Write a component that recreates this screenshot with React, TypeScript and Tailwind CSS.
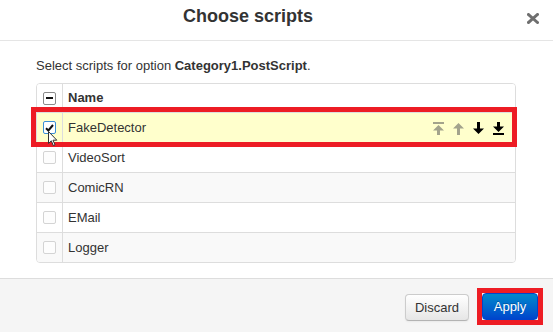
import React from "react";

type Script = { name: string; checked: boolean };

const scripts: Script[] = [
  { name: "FakeDetector", checked: true },
  { name: "VideoSort", checked: false },
  { name: "ComicRN", checked: false },
  { name: "EMail", checked: false },
  { name: "Logger", checked: false },
];

function rowBg(i: number) {
  if (i === 0) return "bg-[#ffffcc]";
  if (i % 2 === 0) return "bg-[#f9f9f9]";
  return "bg-white";
}

// glyph-style move arrows, 11x13
function MoveIcon({ kind, color }: { kind: "top" | "up" | "down" | "bottom"; color: string }) {
  const shapes: Record<string, React.ReactNode> = {
    top: (
      <>
        <rect x="0" y="0" width="11" height="2" />
        <polygon points="5.5,3 11,8.5 7,8.5 7,13 4,13 4,8.5 0,8.5" />
      </>
    ),
    up: <polygon points="5.5,1 11,6.5 7,6.5 7,13 4,13 4,6.5 0,6.5" />,
    down: <polygon points="4,0 7,0 7,6.5 11,6.5 5.5,12 0,6.5 4,6.5" />,
    bottom: (
      <>
        <polygon points="4,0 7,0 7,4.5 11,4.5 5.5,10 0,4.5 4,4.5" />
        <rect x="0" y="11" width="11" height="2" />
      </>
    ),
  };
  return (
    <svg width="11" height="13" viewBox="0 0 11 13" fill={color} className="shrink-0">
      {shapes[kind]}
    </svg>
  );
}

function Checkbox({ checked, focused }: { checked: boolean; focused?: boolean }) {
  return (
    <div
      className={[
        "w-[13px] h-[13px] rounded-[2px] border flex items-center justify-center",
        focused ? "border-[#3b8fd6] bg-white" : "border-[#d4d4d4] bg-[#fdfdfd]",
      ].join(" ")}
    >
      {checked ? (
        <svg width="9" height="8" viewBox="0 0 9 8">
          <path d="M1 4.2 L3.4 6.5 L8 1" fill="none" stroke="#111" strokeWidth="2" />
        </svg>
      ) : null}
    </div>
  );
}

export default function App() {
  return (
    <div className="w-[553px] h-[332px] bg-white overflow-hidden flex flex-col font-['Liberation_Sans',Arial,sans-serif] text-[#333]">
      {/* header */}
      <div className="h-[41px] shrink-0 border-b border-[#e5e5e5] flex items-start">
        <h3 className="w-[496px] pt-[5px] text-center text-[18px] leading-[23px] font-bold text-[#333]">
          Choose scripts
        </h3>
        <svg width="12" height="11" viewBox="0 0 12 11" className="ml-[31px] mt-[13px]">
          <path d="M1.5 1.5 L10.5 9.5 M10.5 1.5 L1.5 9.5" stroke="#6f6f6f" strokeWidth="3" strokeLinecap="square" />
        </svg>
      </div>

      {/* body */}
      <div className="flex-1 pt-[16px] pl-[36px]">
        <p className="text-[13px] leading-[18px] mb-[8px]">
          Select scripts for option <b>Category1.PostScript</b>.
        </p>

        <div className="relative w-[480px]">
          <div className="border border-[#ddd] rounded-[4px] overflow-hidden text-[13px]">
            <div className="h-[28px] flex bg-white">
              <div className="w-[26px] border-r border-[#ddd] flex items-center justify-center">
                <div className="w-[13px] h-[13px] rounded-[2px] border border-[#8a8a8a] bg-white flex items-center justify-center">
                  <div className="w-[7px] h-[2px] bg-[#111]" />
                </div>
              </div>
              <div className="pl-[5px] flex items-center font-bold">Name</div>
            </div>
            {scripts.map((s, i) => (
              <div key={s.name} className={`h-[30px] border-t border-[#ddd] flex ${rowBg(i)}`}>
                <div className="w-[26px] border-r border-[#ddd] flex items-center justify-center">
                  <Checkbox checked={s.checked} focused={i === 0} />
                </div>
                <div className="flex-1 pl-[5px] flex items-center">{s.name}</div>
                {i === 0 ? (
                  <div className="flex items-center gap-[9px] pr-[11px] pt-px">
                    <MoveIcon kind="top" color="#a3a38c" />
                    <MoveIcon kind="up" color="#a3a38c" />
                    <MoveIcon kind="down" color="#000" />
                    <MoveIcon kind="bottom" color="#000" />
                  </div>
                ) : null}
              </div>
            ))}
          </div>

          {/* highlight around the first row */}
          <div className="absolute left-[-5px] top-[24px] w-[486px] h-[40px] border-[5px] border-[#ed1c24] pointer-events-none" />

          {/* mouse pointer */}
          <svg
            width="10"
            height="16"
            viewBox="0 0 10 16"
            className="absolute left-[12px] top-[48px] pointer-events-none"
          >
            <path d="M0.5 0.5 L0.5 12.5 L3.3 9.8 L5.3 14.5 L7 13.8 L5 9.2 L8.8 9.2 Z" fill="#fff" stroke="#333" strokeWidth="1" />
          </svg>
        </div>
      </div>

      {/* footer */}
      <div className="h-[54px] shrink-0 border-t border-[#ddd] bg-[#f5f5f5] flex justify-end items-start gap-[13px] pt-[15px] pr-[15px]">
        <button
          type="button"
          className="w-[64px] h-[27px] rounded-[4px] border border-[#ccc] border-b-[#b3b3b3] bg-gradient-to-b from-white to-[#e6e6e6] text-[13px] text-[#333] shadow-[inset_0_1px_0_rgba(255,255,255,0.2),0_1px_2px_rgba(0,0,0,0.05)]"
        >
          Discard
        </button>
        <div className="relative -mt-px">
          <button
            type="button"
            className="w-[56px] h-[27px] rounded-[4px] border border-[#0044cc] bg-gradient-to-b from-[#0088cc] to-[#0044cc] text-[13px] text-white [text-shadow:0_-1px_0_rgba(0,0,0,0.25)]"
          >
            Apply
          </button>
          <div className="absolute -inset-[5px] border-[5px] border-[#ed1c24] pointer-events-none" />
        </div>
      </div>
    </div>
  );
}
